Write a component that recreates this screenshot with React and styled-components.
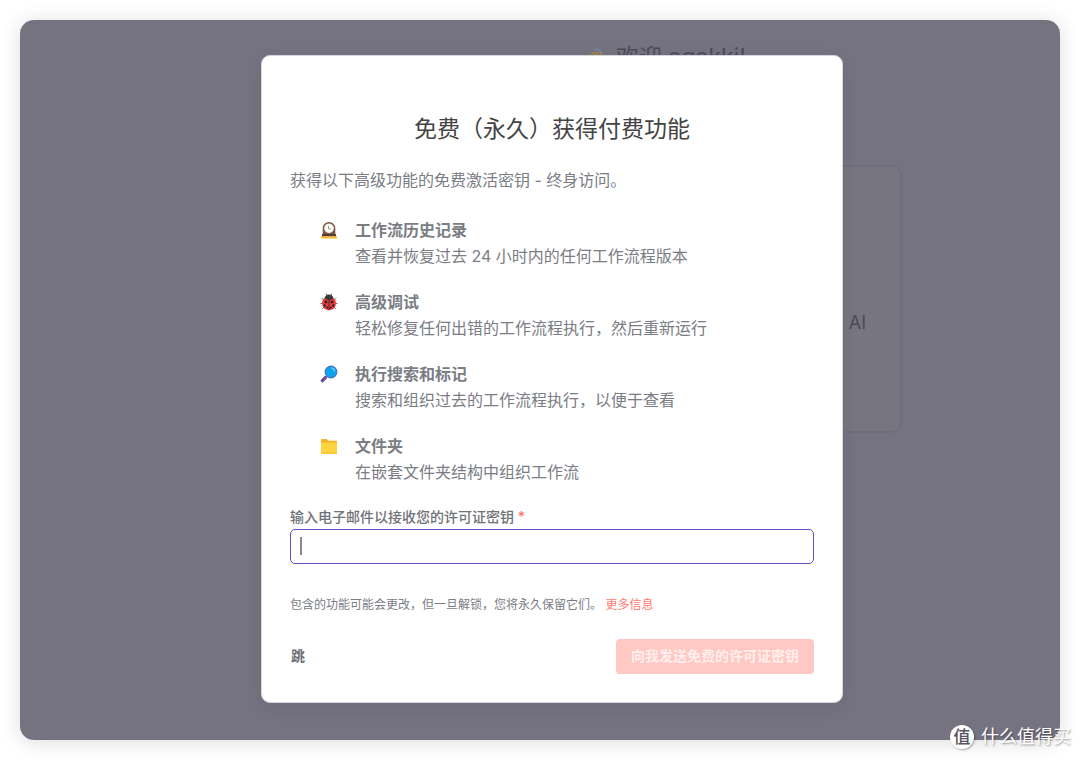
import React from "react";
import styled, { createGlobalStyle } from "styled-components";

const GlobalStyle = createGlobalStyle`
  *, *::before, *::after { box-sizing: border-box; }
  body {
    margin: 0;
    background: #fff;
    font-family: Inter, "Noto Sans CJK SC", sans-serif;
    font-size: 16px;
    color: #7a7d84;
  }
  h1, h2, h3, p, ul { margin: 0; padding: 0; }
  button, input { font-family: inherit; }
`;

const Screen = styled.div`
  display: grid;
  min-height: 100vh;
  padding: 20px;
`;

const Frame = styled.div`
  display: grid;
  border-radius: 14px;
  overflow: hidden;
  background: #757380;
`;

const Shadow = styled.div`
  display: grid;
  border-radius: 14px;
  box-shadow: 0 2px 20px rgba(0, 0, 0, 0.14);
`;

const Page = styled.div`
  grid-area: 1 / 1;
  display: flex;
  flex-direction: column;
  align-items: center;
  padding: 20px 0 0 254px;
`;

const Welcome = styled.h1`
  display: flex;
  align-items: center;
  gap: 10px;
  font-size: 23px;
  line-height: 34px;
  font-weight: 400;
  color: #4d4b56;
`;

const StarterCard = styled.div`
  display: flex;
  align-items: center;
  justify-content: flex-end;
  width: 470px;
  max-width: 100%;
  height: 268px;
  margin-top: 91px;
  padding: 46px 34px 0 0;
  border: 2px solid #706e7a;
  border-radius: 10px;
  background: #77757f;
  color: #4d4b56;
  font-size: 18px;
`;

const Overlay = styled.div`
  grid-area: 1 / 1;
  z-index: 1;
  display: flex;
  justify-content: center;
  align-items: flex-start;
  padding: 35px 0 37px 24px;
`;

const Modal = styled.section`
  width: 56%;
  min-width: 582px;
  padding: 58px 28px 28px;
  border: 1px solid #d3d5df;
  border-radius: 9px;
  background: #fff;
  box-shadow: 0 5px 16px rgba(60, 58, 72, 0.12);
`;

const Title = styled.h2`
  text-align: center;
  font-size: 23px;
  line-height: 30px;
  font-weight: 400;
  color: #444;
`;

const Intro = styled.p`
  margin-top: 23px;
  line-height: 26px;
`;

const Features = styled.ul`
  display: flex;
  flex-direction: column;
  gap: 19px;
  margin-top: 24px;
  padding-left: 30px;
  list-style: none;
`;

const Feature = styled.li`
  display: flex;
  gap: 17px;
`;

const Emoji = styled.svg`
  flex: none;
  width: 18px;
  height: 18px;
  margin-top: 4px;
`;

const FeatureTitle = styled.h3`
  font-size: 16px;
  line-height: 26px;
  font-weight: 700;
`;

const FeatureText = styled.p`
  line-height: 27px;
`;

const Label = styled.label`
  display: block;
  margin-top: 21px;
  font-size: 14px;
  line-height: 20px;
  font-weight: 500;
  color: #707278;
`;

const Required = styled.span`
  color: #ff7568;
`;

const Field = styled.div`
  position: relative;
  margin-top: 2px;
`;

const EmailInput = styled.input`
  display: block;
  width: 100%;
  height: 35px;
  padding: 0 10px;
  border: 1px solid #5f51c4;
  border-radius: 5px;
  outline: none;
  background: #fff;
  font-size: 16px;
  caret-color: transparent;
`;

const Caret = styled.span`
  position: absolute;
  left: 10px;
  top: 8px;
  width: 2px;
  height: 18px;
  background: #8a8a8c;
`;

const Note = styled.p`
  margin-top: 31px;
  font-size: 12px;
  line-height: 20px;
`;

const MoreLink = styled.a`
  color: #ff7c70;
  text-decoration: none;
`;

const Actions = styled.div`
  display: flex;
  align-items: center;
  justify-content: space-between;
  margin-top: 24px;
`;

const Button = styled.button`
  height: 35px;
  padding: ${(p) => (p.$primary ? "0 15px 2px" : "0 1px 2px")};
  border: 0;
  border-radius: 4px;
  background: ${(p) => (p.$primary ? "#ffc8c2" : "transparent")};
  color: ${(p) => (p.$primary ? "#ffefed" : "#6c6f75")};
  font-size: 14px;
  line-height: 20px;
  font-weight: 700;
`;

const Watermark = styled.div`
  position: absolute;
  right: 9px;
  bottom: 10px;
  z-index: 2;
  display: flex;
  align-items: center;
  gap: 7px;
  color: #fff;
  font-size: 18px;
  line-height: 26px;
  text-shadow: 1px 1px 2px rgba(0, 0, 0, 0.4);
`;

const Badge = styled.span`
  display: grid;
  place-items: center;
  width: 24px;
  height: 24px;
  border-radius: 50%;
  background: #fff;
  box-shadow: 1px 1px 2px rgba(0, 0, 0, 0.3);
  color: #55535e;
  font-size: 17px;
  line-height: 24px;
  font-weight: 500;
  text-shadow: none;
`;

const Root = styled.main`
  position: relative;
`;

const ClockIcon = () => (
  <Emoji viewBox="0 0 18 18" aria-hidden="true">
    <path d="M2.700 15V7.300a6.300 6.300 0 0 1 12.600 0V15z" fill="#7a5548" />
    <path d="M2 13h14v2.400H2z" fill="#5a3a33" />
    <path d="M1 15.200h16v2.300H1z" fill="#f7b932" />
    <circle cx="9" cy="7.300" r="4.900" fill="#e6dcd6" />
    <circle cx="9" cy="7.300" r="4" fill="#fffdfa" />
    <path d="M8.500 4.800v2.900l2.400.4" fill="none" stroke="#8d8582" strokeWidth=".9" />
  </Emoji>
);

const BugIcon = () => (
  <Emoji viewBox="0 0 18 18" aria-hidden="true">
    <path
      d="M6.200 1 7.500 3M11.800 1l-1.300 2M2 5.500 4 7M16 5.500 14 7M1 10.500h2m14 0h-2M2.500 15.500l1.800-1.500m11.200 1.500-1.800-1.500"
      fill="none"
      stroke="#6a686c"
      strokeWidth="1"
      strokeLinecap="round"
    />
    <ellipse cx="9" cy="10.400" rx="7" ry="6.900" fill="#f03a3a" />
    <path d="M4.600 5.600a4.400 4 0 0 1 8.800 0Q9 8.200 4.600 5.600z" fill="#3a3a3d" />
    <path d="M9 6v11" stroke="#3a2b2e" strokeWidth="1" />
    <g fill="#26272a">
      <circle cx="6" cy="9" r="1.400" />
      <circle cx="12" cy="9" r="1.400" />
      <circle cx="4.700" cy="12.500" r="1.200" />
      <circle cx="13.300" cy="12.500" r="1.200" />
      <circle cx="7.200" cy="14.600" r="1" />
      <circle cx="10.800" cy="14.600" r="1" />
    </g>
  </Emoji>
);

const SearchIcon = () => (
  <Emoji viewBox="0 0 18 18" aria-hidden="true">
    <path d="m7.300 10.700-1.600 1.600" stroke="#8d96a4" strokeWidth="2" />
    <path d="m5.400 12.600-3 3" stroke="#6c4fa3" strokeWidth="3.400" strokeLinecap="round" />
    <circle cx="11" cy="7" r="6.400" fill="#4c74b4" />
    <circle cx="11" cy="7" r="5.300" fill="#0ba5ef" />
    <path d="M12 3.200q2.300.5 2.600 2.700" fill="none" stroke="#73d3fb" strokeWidth="1.200" strokeLinecap="round" />
  </Emoji>
);

const FolderIcon = () => (
  <Emoji viewBox="0 0 18 18" aria-hidden="true">
    <path d="M1 3q0-1 1-1h4.800l1.700 1.800H16q1 0 1 1V7H1z" fill="#f6b326" />
    <path d="M1 5.600h16v10.400q0 1-1 1H2q-1 0-1-1z" fill="#ffd33f" />
    <path d="M1 15h16v1q0 1-1 1H2q-1 0-1-1z" fill="#fbc934" />
  </Emoji>
);

const WaveIcon = () => (
  <svg width="18" height="20" viewBox="0 0 18 20" aria-hidden="true">
    <path d="M6 3.500q4-3 7 1.500" fill="none" stroke="#75829e" strokeWidth="2.400" />
    <path
      d="m4 11-1.500-3M7 10 5.500 6M10 10 9 6m4 5 0-5m1 6 2-3"
      stroke="#a18347"
      strokeWidth="2.600"
      strokeLinecap="round"
    />
    <path d="M2 10q6-4 12 0v5q-5 6-10 0z" fill="#a18347" />
  </svg>
);

const features = [
  { Icon: ClockIcon, title: "工作流历史记录", text: "查看并恢复过去 24 小时内的任何工作流程版本" },
  { Icon: BugIcon, title: "高级调试", text: "轻松修复任何出错的工作流程执行，然后重新运行" },
  { Icon: SearchIcon, title: "执行搜索和标记", text: "搜索和组织过去的工作流程执行，以便于查看" },
  { Icon: FolderIcon, title: "文件夹", text: "在嵌套文件夹结构中组织工作流" },
];

export default function App() {
  return (
    <Root lang="zh-CN">
      <GlobalStyle />
      <Screen>
        <Shadow>
          <Frame>
            <Page>
              <Welcome>
                <WaveIcon />
                欢迎 agakki!
              </Welcome>
              <StarterCard>AI</StarterCard>
            </Page>
            <Overlay>
              <Modal role="dialog" aria-labelledby="modal-title">
                <Title id="modal-title">免费（永久）获得付费功能</Title>
                <Intro>获得以下高级功能的免费激活密钥 - 终身访问。</Intro>
                <Features>
                  {features.map(({ Icon, title, text }) => (
                    <Feature key={title}>
                      <Icon />
                      <div>
                        <FeatureTitle>{title}</FeatureTitle>
                        <FeatureText>{text}</FeatureText>
                      </div>
                    </Feature>
                  ))}
                </Features>
                <Label htmlFor="email">
                  输入电子邮件以接收您的许可证密钥 <Required>*</Required>
                </Label>
                <Field>
                  <EmailInput id="email" type="email" required />
                  <Caret />
                </Field>
                <Note>
                  包含的功能可能会更改，但一旦解锁，您将永久保留它们。 <MoreLink href="#more">更多信息</MoreLink>
                </Note>
                <Actions>
                  <Button type="button">跳</Button>
                  <Button type="button" $primary disabled>
                    向我发送免费的许可证密钥
                  </Button>
                </Actions>
              </Modal>
            </Overlay>
          </Frame>
        </Shadow>
      </Screen>
      <Watermark>
        <Badge>值</Badge>
        什么值得买
      </Watermark>
    </Root>
  );
}
